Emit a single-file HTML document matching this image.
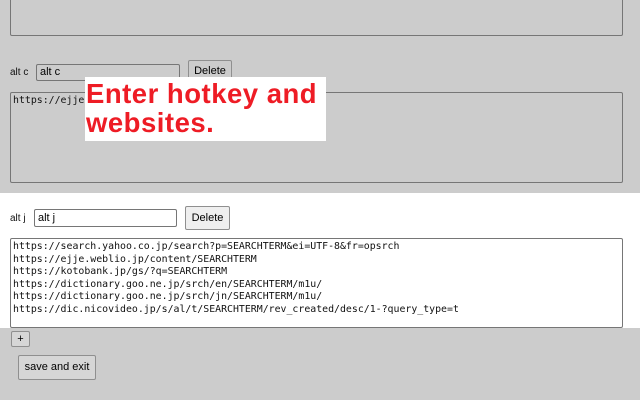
<!DOCTYPE html>
<html><head><meta charset="utf-8"><style>
*{box-sizing:border-box;margin:0;padding:0}
body{width:640px;height:400px;background:#cccccc;position:relative;overflow:hidden;font-family:"Liberation Sans",Arial,sans-serif}
.a{position:absolute}
.ta{position:absolute;border:1px solid #767676;border-radius:2px}
.in{position:absolute;border:1px solid #767676;border-radius:2px;font-size:11px;padding-left:3px;line-height:15px;background:#fff}
.btn{position:absolute;border:1px solid #8f8f8f;border-radius:2px;background:#efefef;font-size:11px;text-align:center}
.lbl{position:absolute;font-size:10px;color:#111}
pre{font-family:"DejaVu Sans Mono","Liberation Mono",monospace;font-size:9.9px;line-height:12.6px;color:#111}
</style></head><body>
<div class="ta" style="left:10px;top:-10px;width:613px;height:46px"></div>
<div class="lbl" style="left:10px;top:67px">alt c</div>
<div class="in" style="left:36px;top:64px;width:144px;height:17px;background:#cccccc">alt c</div>
<div class="btn" style="left:188px;top:60px;width:44px;height:23px;line-height:21px;background:#cccccc">Delete</div>
<div class="ta" style="left:10px;top:92px;width:613px;height:91px"><pre style="padding:2px 0 0 2px">https://ejje</pre></div>
<div class="a" style="left:85px;top:77px;width:241px;height:64px;background:#fff;color:#ee1c25;font-weight:bold;font-family:'Liberation Sans',sans-serif;font-size:27.5px;letter-spacing:0.5px;line-height:29px;padding:2px 0 0 1px;white-space:nowrap">Enter hotkey and<br>websites.</div>
<div class="a" style="left:0;top:193px;width:640px;height:135px;background:#fff"></div>
<div class="lbl" style="left:10px;top:213px">alt j</div>
<div class="in" style="left:34px;top:209px;width:143px;height:18px;line-height:16px">alt j</div>
<div class="btn" style="left:185px;top:206px;width:45px;height:24px;line-height:22px">Delete</div>
<div class="ta" style="left:10px;top:238px;width:613px;height:90px;background:#fff"><pre style="padding:2px 0 0 2px">https://search.yahoo.co.jp/search?p=SEARCHTERM&amp;ei=UTF-8&amp;fr=opsrch
https://ejje.weblio.jp/content/SEARCHTERM
https://kotobank.jp/gs/?q=SEARCHTERM
https://dictionary.goo.ne.jp/srch/en/SEARCHTERM/m1u/
https://dictionary.goo.ne.jp/srch/jn/SEARCHTERM/m1u/
https://dic.nicovideo.jp/s/al/t/SEARCHTERM/rev_created/desc/1-?query_type=t</pre></div>
<div class="btn" style="left:11px;top:331px;width:19px;height:16px;line-height:14px;background:#d6d6d6">+</div>
<div class="btn" style="left:18px;top:355px;width:78px;height:25px;line-height:23px;background:#d6d6d6">save and exit</div>
</body></html>
